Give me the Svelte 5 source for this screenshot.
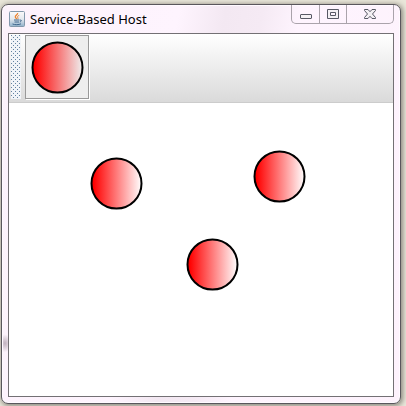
<script lang="ts">
	type Shape = { id: number; x: number; y: number };

	const title = 'Service-Based Host';

	// positions are relative to the canvas' top left corner
	let shapes: Shape[] = $state([
		{ id: 1, x: 81, y: 54 },
		{ id: 2, x: 244, y: 47 },
		{ id: 3, x: 177, y: 135 }
	]);
</script>

{#snippet circle(gradient: string, end: string)}
	<svg class="circle" viewBox="0 0 53 53" aria-hidden="true">
		<defs>
			<linearGradient id={gradient} x1="0" x2="1" y1="0" y2="0">
				<stop offset="0.04" stop-color="#f00" />
				<stop offset="1" stop-color={end} />
			</linearGradient>
		</defs>
		<circle cx="26.5" cy="26.5" r="25" fill="url(#{gradient})" stroke="#000" stroke-width="2" />
	</svg>
{/snippet}

<div class="desktop">
	<main class="window">
		<header class="titlebar">
			<svg class="logo" viewBox="0 0 16 16" aria-hidden="true">
				<defs>
					<linearGradient id="logo-bg" x1="0" x2="0" y1="0" y2="1">
						<stop offset="0" stop-color="#fafafa" />
						<stop offset="0.5" stop-color="#e4e9ee" />
						<stop offset="1" stop-color="#8fb0ca" />
					</linearGradient>
				</defs>
				<rect x="0.5" y="0.5" width="15" height="15" rx="1" fill="url(#logo-bg)" stroke="#8298ab" />
				<path d="M8.6 2c.6 1.5-2.6 2.5-2.3 4 .1.8 1 1.2 1.4 2" fill="none" stroke="#ee812b" stroke-width="1.3" />
				<path d="M10.2 4.3C8.7 5 8 5.700 8.700 6.500c.5.6.4 1-.3 1.600" fill="none" stroke="#ee812b" />
				<path
					d="M5 9h5.500M5.500 11h4.500M11 9.200c1.900-.6 1.700 1.300-.2 1.800M3.500 13c2 .9 6.500.9 8.500-.2"
					fill="none"
					stroke="#40678d"
				/>
			</svg>
			<h1>{title}</h1>
			<div class="controls">
				<button type="button" class="minimize" aria-label="Minimize">
					<svg viewBox="0 0 14 12" aria-hidden="true">
						<rect x="1.5" y="6.5" width="11" height="4" rx="0.5" fill="#f4f0f4" stroke="#575864" />
					</svg>
				</button>
				<button type="button" class="maximize" aria-label="Maximize">
					<svg viewBox="0 0 14 12" aria-hidden="true">
						<path d="M1.5 1.5h11v9h-11zM4.5 4.500v3h5v-3z" fill="#f4f0f4" fill-rule="evenodd" stroke="#575864" />
					</svg>
				</button>
				<button type="button" class="close" aria-label="Close">
					<svg viewBox="0 0 14 12" aria-hidden="true">
						<path
							d="M1.500 1.500H5l2 2.200 2-2.200h3.500v1L9.500 6l3 3.500v1H9L7 8.300l-2 2.200H1.500v-1L4.500 6l-3-3.500z"
							fill="#f4f0f4"
							stroke="#575864"
						/>
					</svg>
				</button>
			</div>
		</header>

		<div class="content">
			<div class="toolbar" role="toolbar" aria-label="Shapes">
				<svg class="grip" aria-hidden="true">
					<defs>
						<pattern id="bumps" width="4" height="4" patternUnits="userSpaceOnUse">
							<rect width="4" height="4" fill="#f1f4f8" />
							<rect width="1" height="1" fill="#6382a0" />
							<rect x="2" y="2" width="1" height="1" fill="#6382a0" />
						</pattern>
					</defs>
					<rect width="100%" height="100%" fill="url(#bumps)" />
				</svg>
				<button type="button" class="tool" aria-label="Circle">
					{@render circle('tool-fill', '#eee')}
				</button>
			</div>
			<div class="canvas">
				{#each shapes as shape (shape.id)}
					<div class="shape" style="left: {shape.x}px; top: {shape.y}px">
						{@render circle(`shape-fill-${shape.id}`, '#fff')}
					</div>
				{/each}
			</div>
		</div>
	</main>
</div>

<style>
	:global(body) {
		margin: 0;
	}
	.desktop {
		box-sizing: border-box;
		min-height: 100vh;
		display: flex;
		padding: 4px 5px 2px 1px;
		background: #e9e6d9;
		overflow: hidden;
	}
	.window {
		flex: 1;
		box-sizing: border-box;
		display: flex;
		flex-direction: column;
		padding: 0 6px 6px;
		border: 1px solid #59565c;
		border-radius: 7px;
		background:
			radial-gradient(6px 9px at 3px 85%, #bfb0bd, transparent),
			linear-gradient(100deg, #fcf2fb, #fef4fe 38%, #f3e8f2 48%, #f5eaf4 56%, #fef4fe 64%, #fdf2fc);
		box-shadow:
			inset 0 0 0 1px #fffaff,
			1px 1px 5px 1px #8d8a80;
	}
	.titlebar {
		display: flex;
		align-items: center;
		gap: 5px;
		height: 28px;
		padding-left: 1px;
	}
	.logo {
		width: 16px;
		height: 16px;
	}
	h1 {
		flex: 1;
		margin: 0;
		font: 13px/18px 'Noto Sans', 'Open Sans', sans-serif;
		color: #000;
	}
	.controls {
		align-self: flex-start;
		display: flex;
		border: 1px solid #aaa3ab;
		border-top: 0;
		border-radius: 0 0 5px 5px;
	}
	.controls button {
		display: flex;
		align-items: center;
		justify-content: center;
		width: 27px;
		height: 18px;
		padding: 0;
		border: 0;
		border-right: 1px solid #aaa3ab;
		background: transparent;
	}
	.controls button.minimize {
		width: 28px;
	}
	.controls button.close {
		width: 46px;
		border-right: 0;
	}
	.controls svg {
		width: 14px;
		height: 12px;
	}
	.content {
		flex: 1;
		display: flex;
		flex-direction: column;
		border: 1px solid #737074;
		background: #fff;
	}
	.toolbar {
		display: flex;
		gap: 4px;
		padding: 1px 2px 3px;
		border-bottom: 1px solid #ccc;
		background: linear-gradient(#fff, #dadada);
	}
	.grip {
		width: 10px;
		height: 64px;
	}
	.tool {
		padding: 5px 4px 4px 5px;
		border: 1px solid #999;
		background: #eee;
		box-shadow: 1px 1px #fff;
	}
	.circle {
		display: block;
		width: 53px;
		height: 53px;
	}
	.canvas {
		position: relative;
		flex: 1;
	}
	.shape {
		position: absolute;
	}
</style>
